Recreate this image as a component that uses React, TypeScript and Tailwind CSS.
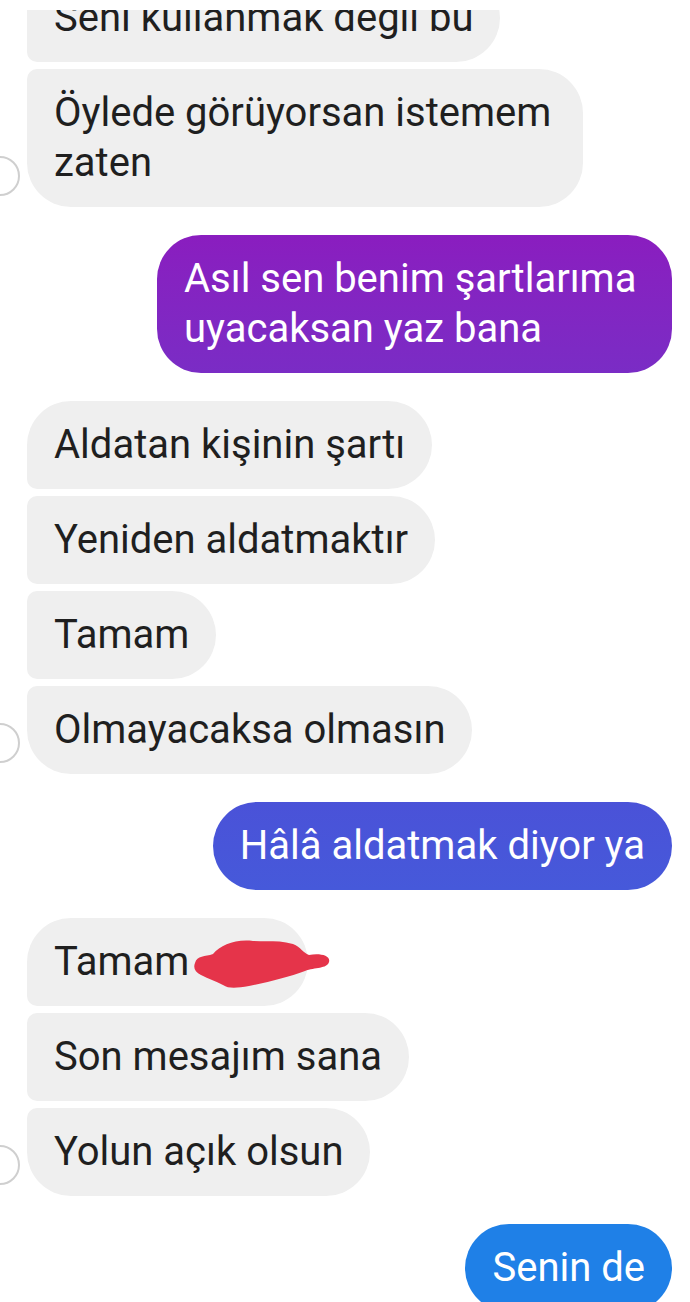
import React from "react";

type Msg = {
  text: string;
  side: "left" | "right";
  shape: string;
  color?: string;
  width?: string;
  avatar?: boolean;
  scribble?: boolean;
};

const messages: Msg[] = [
  { text: "Seni kullanmak değil bu", side: "left", shape: "rounded-l-[10px] rounded-r-[44px]" },
  {
    text: "Öylede görüyorsan istemem zaten",
    side: "left",
    shape: "rounded-tl-[10px] rounded-bl-[44px] rounded-r-[44px]",
    width: "w-[556px]",
    avatar: true,
  },
  {
    text: "Asıl sen benim şartlarıma uyacaksan yaz bana",
    side: "right",
    shape: "rounded-[44px]",
    color: "bg-gradient-to-b from-[#8a1dbf] to-[#7a2cc5]",
    width: "w-[515px]",
  },
  { text: "Aldatan kişinin şartı", side: "left", shape: "rounded-tl-[44px] rounded-bl-[10px] rounded-r-[44px]" },
  { text: "Yeniden aldatmaktır", side: "left", shape: "rounded-l-[10px] rounded-r-[44px]" },
  { text: "Tamam", side: "left", shape: "rounded-l-[10px] rounded-r-[44px]" },
  {
    text: "Olmayacaksa olmasın",
    side: "left",
    shape: "rounded-tl-[10px] rounded-bl-[44px] rounded-r-[44px]",
    avatar: true,
  },
  {
    text: "Hâlâ aldatmak diyor ya",
    side: "right",
    shape: "rounded-[44px]",
    color: "bg-gradient-to-b from-[#4a52d8] to-[#4659da]",
  },
  {
    text: "Tamam",
    side: "left",
    shape: "rounded-tl-[44px] rounded-bl-[10px] rounded-r-[44px]",
    width: "w-[281px]",
    scribble: true,
  },
  { text: "Son mesajım sana", side: "left", shape: "rounded-l-[10px] rounded-r-[44px]" },
  {
    text: "Yolun açık olsun",
    side: "left",
    shape: "rounded-tl-[10px] rounded-bl-[44px] rounded-r-[44px]",
    avatar: true,
  },
  {
    text: "Senin de",
    side: "right",
    shape: "rounded-[44px]",
    color: "bg-[#1f80e7]",
  },
];

function Bubble({ m, gap }: { m: Msg; gap: string }) {
  const isLeft = m.side === "left";
  return (
    <div className={`relative flex ${isLeft ? "justify-start" : "justify-end"} ${gap}`}>
      {m.avatar && (
        <div className="absolute -left-[47px] bottom-[11px] w-[40px] h-[40px] rounded-full bg-white border-2 border-[#cfcfcf]" />
      )}
      <div
        className={`relative px-[27px] py-[19px] text-[40px] leading-[50px] ${m.shape} ${m.width ?? ""} ${
          isLeft ? "bg-[#efefef] text-[#1f1f1f]" : `${m.color} text-white`
        }`}
      >
        {m.text}
        {m.scribble && (
          <svg
            className="absolute left-[164px] top-[17px] w-[142px] h-[56px]"
            viewBox="0 0 142 56"
          >
            <path
              d="M4 28 C6 20 14 22 22 19 C30 10 44 4 62 6 C76 7 88 5 102 9 C110 12 112 18 118 20 C128 18 140 20 138 27 C136 34 124 32 114 36 C98 42 78 47 58 51 C46 53 38 54 32 50 C24 46 18 44 10 40 C4 37 2 33 4 28 Z"
              fill="#e5344a"
            />
          </svg>
        )}
      </div>
    </div>
  );
}

export default function App() {
  return (
    <div
      className="w-[690px] h-[1302px] overflow-hidden bg-white"
      style={{ fontFamily: "Roboto, 'Noto Sans', sans-serif" }}
    >
      <div className="relative z-10 h-[10px] bg-white" />
      <div className="-mt-[36px] pl-[27px] pr-[18px]">
        {messages.map((m, i) => (
          <Bubble
            key={i}
            m={m}
            gap={
              i === 0
                ? ""
                : messages[i - 1].side !== m.side
                  ? "mt-[28px]"
                  : "mt-[7px]"
            }
          />
        ))}
      </div>
    </div>
  );
}
